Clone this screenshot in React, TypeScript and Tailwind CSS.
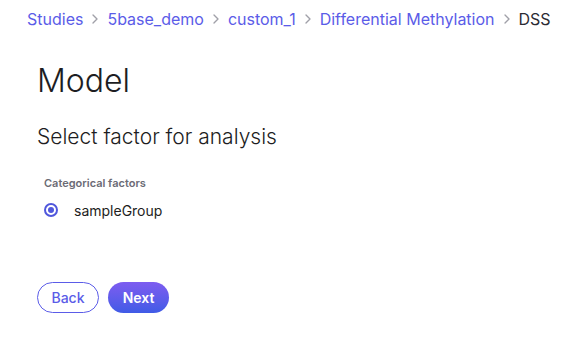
import { ChevronRight } from "lucide-react";

const crumbs = ["Studies", "5base_demo", "custom_1", "Differential Methylation"];

function Breadcrumb() {
  return (
    <nav className="flex items-center whitespace-nowrap text-[16px] leading-5">
      {crumbs.map((c) => (
        <span key={c} className="flex items-center">
          <a className="text-[#5b5ce8]">{c}</a>
          <ChevronRight className="mx-[4px] h-4 w-4 text-[#a0a0a8]" strokeWidth={2} />
        </span>
      ))}
      <span className="text-[#2b2b33]">DSS</span>
    </nav>
  );
}

export default function App() {
  return (
    <div className="min-h-[337px] w-[580px] bg-white font-['Inter',sans-serif]">
      <div className="px-[27px] pt-[9px]">
        <Breadcrumb />
      </div>
      <div className="px-[37px]">
        <h1 className="mt-[32px] text-[32px] font-light leading-10 text-[#1d1d22]">Model</h1>
        <h2 className="mt-[22px] text-[21px] font-light leading-7 text-[#1d1d22]">
          Select factor for analysis
        </h2>
        <div className="mt-[24px] pl-[7px]">
          <p className="text-[11px] font-semibold text-[#6b6b75]">Categorical factors</p>
          <label className="mt-[8px] flex items-center gap-[16px]">
            <span className="flex h-[14px] w-[14px] items-center justify-center rounded-full border-2 border-[#5057dc]">
              <span className="h-[6px] w-[6px] rounded-full bg-[#5057dc]" />
            </span>
            <span className="text-[14px] text-[#1d1d22]">sampleGroup</span>
          </label>
        </div>
        <div className="mt-[61px] flex gap-[9px]">
          <button className="h-[31px] w-[62px] rounded-full border border-[#5b5ce8] text-[14px] font-medium text-[#5b5ce8]">
            Back
          </button>
          <button className="h-[31px] w-[61px] rounded-full bg-gradient-to-b from-[#7d5cf0] to-[#3f5be6] text-[14px] font-semibold text-white">
            Next
          </button>
        </div>
      </div>
    </div>
  );
}
